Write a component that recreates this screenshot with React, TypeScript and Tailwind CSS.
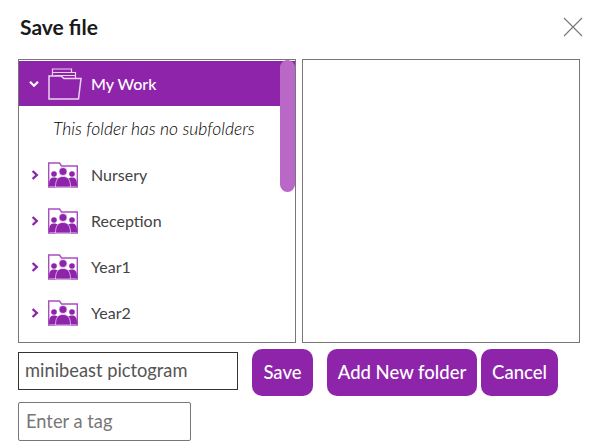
import React from "react";

function Chevron({ down, white }: { down?: boolean; white?: boolean }) {
  return (
    <svg width="10" height="10" viewBox="0 0 10 10" fill="none" className={white ? "text-white" : "text-[#8e24aa]"}>
      {down ? (
        <path d="M1 2.8 L5 6.8 L9 2.8" stroke="currentColor" strokeWidth="2.2" />
      ) : (
        <path d="M2.6 1 L6.8 5 L2.6 9" stroke="currentColor" strokeWidth="2.4" />
      )}
    </svg>
  );
}

function OpenFolder() {
  return (
    <svg width="34" height="32" viewBox="0 0 34 32" fill="none" stroke="#e9d3f0" strokeWidth="1.2">
      <path d="M4.5 8 V1 H23.5 V4.5 H27.5 V10" />
      <path d="M4.5 4.5 H23.5 M7 7.5 H27" strokeWidth="1.1" />
      <path d="M1 31 V8 H13 L16 10.5 H33 L30.5 31 Z" strokeWidth="1.5" fill="#8e24aa" />
    </svg>
  );
}

function GroupFolder() {
  return (
    <svg width="30" height="26" viewBox="0 0 30 26" fill="none">
      <path d="M0.7 25 V1 H11.5 L13.5 4 H29.3 V25 Z" stroke="#a94dc1" strokeWidth="1.4" fill="white" />
      <circle cx="6" cy="12" r="2.8" fill="#8e24aa" />
      <circle cx="24" cy="12" r="2.8" fill="#8e24aa" />
      <path d="M1 23 C1 17 3 15.5 6 15.5 C8 15.5 9 16 10 17 L10 24 H1 Z" fill="#8e24aa" />
      <path d="M29 23 C29 17 27 15.5 24 15.5 C22 15.5 21 16 20 17 L20 24 H29 Z" fill="#8e24aa" />
      <circle cx="15" cy="9.5" r="4" fill="#8e24aa" stroke="white" strokeWidth="0.6" />
      <path d="M7.5 25 C7.5 17 10.5 14.5 15 14.5 C19.5 14.5 22.5 17 22.5 25 Z" fill="#8e24aa" stroke="white" strokeWidth="0.6" />
    </svg>
  );
}

function Row({ label }: { label: string }) {
  return (
    <div className="flex h-[46px] items-center">
      <div className="flex w-[29px] justify-center pl-[3px]">
        <Chevron />
      </div>
      <div className="flex w-[43px]">
        <GroupFolder />
      </div>
      <span className="text-[16px] text-[#444444]">{label}</span>
    </div>
  );
}

function Button({ children, className }: { children: React.ReactNode; className: string }) {
  return (
    <button className={`flex h-[47px] items-center justify-center rounded-[10px] bg-[#8e24aa] text-[18.5px] font-medium text-white ${className}`}>
      {children}
    </button>
  );
}

export default function App() {
  return (
    <div className="h-[446px] w-[598px] overflow-hidden bg-white font-['Lato','Noto_Sans',sans-serif]">
      <div className="flex h-[59px] items-start justify-between pl-[20px] pr-[15px] pt-[15px]">
        <h1 className="text-[21px] leading-[24px] font-bold text-[#1a1a1a]">Save file</h1>
        <svg width="20" height="20" viewBox="0 0 20 20" className="mt-[2px]" stroke="#777777" strokeWidth="1.1">
          <path d="M1 1 L19 19 M19 1 L1 19" />
        </svg>
      </div>

      <div className="ml-[18px] flex gap-[6px]">
        <div className="relative h-[284px] w-[278px] overflow-hidden border border-[#777777] pt-[1px]">
          <div className="flex h-[45px] items-center bg-[#8e24aa] text-white">
            <div className="flex w-[29px] justify-center">
              <Chevron down white />
            </div>
            <div className="flex w-[43px]">
              <OpenFolder />
            </div>
            <span className="text-[16px] font-medium">My Work</span>
          </div>
          <div className="flex h-[46px] items-center pl-[34px] text-[17.5px] font-light italic text-black">
            This folder has no subfolders
          </div>
          <Row label="Nursery" />
          <Row label="Reception" />
          <Row label="Year1" />
          <Row label="Year2" />
          <div className="absolute right-0 top-0 h-[132px] w-[15px] rounded-full bg-[#ba68c8]" />
        </div>
        <div className="h-[284px] w-[278px] border border-[#777777]" />
      </div>

      <div className="ml-[18px] mt-[6px] flex items-start">
        <div className="mt-[3px] flex h-[38px] w-[220px] items-center border border-[#333333] pl-[6px] text-[18.3px] text-[#555555]">
          minibeast pictogram
        </div>
        <Button className="ml-[14px] w-[61px]">Save</Button>
        <Button className="ml-[14px] w-[150px]">Add New folder</Button>
        <Button className="ml-[4px] w-[77px]">Cancel</Button>
      </div>

      <div className="ml-[18px] mt-[6px] flex h-[39px] w-[173px] items-center rounded-[2px] border border-[#777777] pl-[7px] text-[18.3px] text-[#777777]">
        Enter a tag
      </div>
    </div>
  );
}
